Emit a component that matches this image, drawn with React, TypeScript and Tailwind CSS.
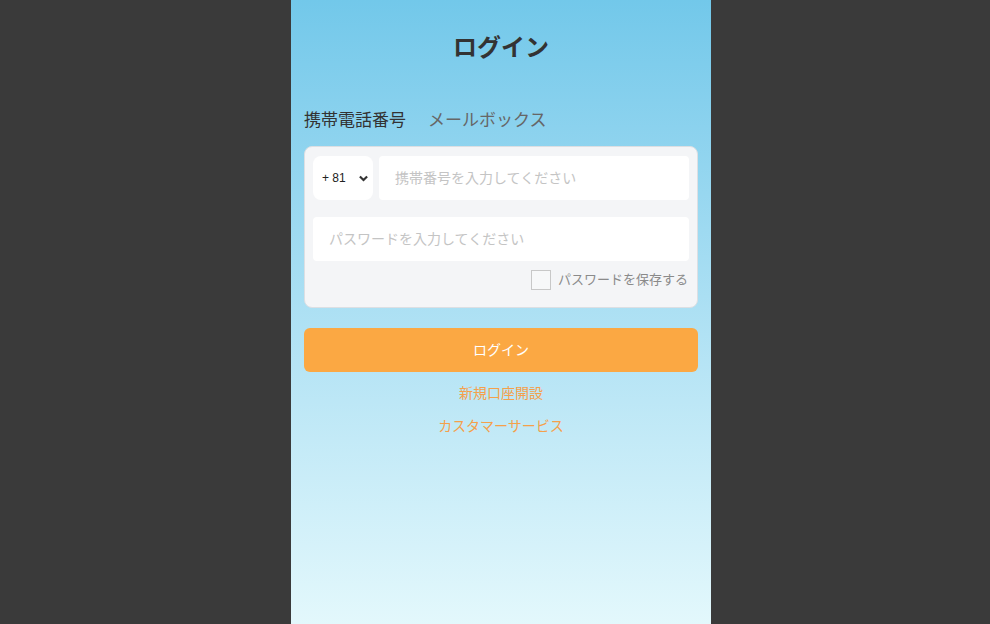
import { useState } from "react";

const font = { fontFamily: '"Liberation Sans", "Noto Sans CJK JP", sans-serif' };

export default function App() {
  const [tab, setTab] = useState<"phone" | "mail">("phone");
  const [code, setCode] = useState("81");
  const [phone, setPhone] = useState("");
  const [password, setPassword] = useState("");
  const [remember, setRemember] = useState(false);

  return (
    <div className="flex h-[624px] w-full justify-center bg-[#3a3a3a] pl-3" style={font}>
      <div className="flex w-[420px] flex-col bg-gradient-to-b from-[#72c8ea] to-[#e3f8fc] px-[13px] pt-8">
        <h1 className="text-center text-[24px] font-bold leading-8 text-[#333]">ログイン</h1>

        {/* tabs */}
        <div className="mt-[45px] flex gap-[22px] text-[17px] leading-6">
          <button
            onClick={() => setTab("phone")}
            className={tab === "phone" ? "text-[#333]" : "text-[#666]"}
          >
            携帯電話番号
          </button>
          <button
            onClick={() => setTab("mail")}
            className={tab === "mail" ? "text-[#333]" : "text-[#666]"}
          >
            メールボックス
          </button>
        </div>

        {/* form card */}
        <div className="mt-[13px] rounded-lg border border-[#dcdfe3] bg-[#f4f5f7] px-2 pb-[17px] pt-[9px]">
          <div className="flex h-11 gap-[6px]">
            <div className="relative w-[60px] rounded-lg bg-white">
              <select
                value={code}
                onChange={(e) => setCode(e.target.value)}
                className="h-full w-full appearance-none bg-transparent pl-[9px] text-[12px] text-[#222] outline-none"
              >
                <option value="81">+ 81</option>
                <option value="86">+ 86</option>
                <option value="1">+ 1</option>
              </select>
              <svg
                className="pointer-events-none absolute right-[5px] top-[19px] h-[7px] w-[9px]"
                viewBox="0 0 10 7"
                fill="none"
                stroke="#333"
                strokeWidth={2.4}
              >
                <path d="M1 1.2l4 4 4-4" />
              </svg>
            </div>
            <input
              type="text"
              value={phone}
              onChange={(e) => setPhone(e.target.value)}
              placeholder={tab === "phone" ? "携帯番号を入力してください" : "メールアドレスを入力してください"}
              className="flex-1 rounded-sm bg-white px-4 text-[14px] text-[#333] outline-none placeholder:text-[#c4c4c4]"
            />
          </div>

          <input
            type="password"
            value={password}
            onChange={(e) => setPassword(e.target.value)}
            placeholder="パスワードを入力してください"
            className="mt-[17px] h-11 w-full rounded-sm bg-white px-4 text-[14px] text-[#333] outline-none placeholder:text-[#c4c4c4]"
          />

          <label className="mt-[9px] flex cursor-pointer items-center justify-end gap-[7px] pr-px">
            <span
              onClick={() => setRemember(!remember)}
              className="flex h-5 w-5 items-center justify-center border border-[#c8c8c8] bg-[#f7f8f9] text-[12px] text-[#fba843]"
            >
              {remember ? "✓" : ""}
            </span>
            <span className="text-[13px] leading-5 text-[#8a8a8a]">パスワードを保存する</span>
          </label>
        </div>

        <button className="mt-5 h-11 w-full rounded-md bg-[#fba843] text-[14px] text-white">ログイン</button>

        <a className="mt-[11px] text-center text-[14px] leading-5 text-[#f5a04a]" href="#">
          新規口座開設
        </a>
        <a className="mt-[13px] text-center text-[14px] leading-5 text-[#f5a04a]" href="#">
          カスタマーサービス
        </a>
      </div>
    </div>
  );
}
